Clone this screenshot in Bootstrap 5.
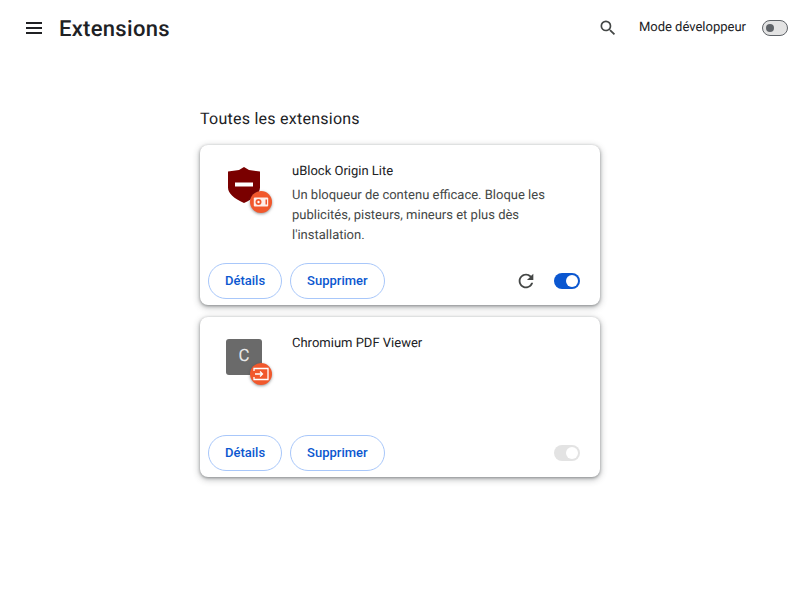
<!DOCTYPE html>
<html lang="fr"><head><meta charset="utf-8"><title>Extensions</title>
<link href="https://cdn.jsdelivr.net/npm/bootstrap@5.3.0/dist/css/bootstrap.min.css" rel="stylesheet">
<style>
body{font-family:Roboto,"Liberation Sans",sans-serif;background:#fff;color:#202124;font-size:13px;text-rendering:geometricPrecision}
.top-bar{height:56px;padding:0 12px 0 24px}
.burger{width:20px;height:20px;display:block}
.page-title{font-size:22px;font-weight:500;letter-spacing:.3px;margin:4px 0 0 15px;line-height:26px;color:#202124}
.dev-label{font-size:13px;margin:0 16px 0 21px;color:#202124}
.search-ico{width:20px;height:20px;display:block}
.sw{display:block;width:26px;height:16px;border-radius:8px;position:relative;flex:none}
.sw::after{content:"";position:absolute;border-radius:50%}
.sw-off{background:#e3e3e3;border:1px solid #5f6368}
.sw-off::after{left:3px;top:3px;width:8px;height:8px;background:#5f6368}
.sw-on{background:#0b57d0}
.sw-on::after{right:2px;top:2px;width:12px;height:12px;background:#fff}
.sw-dis{background:#e3e3e3}
.sw-dis::after{right:2px;top:2px;width:12px;height:12px;background:#fff}
.main-col{width:400px;margin:0 auto;padding-top:51px}
.sect-title{font-size:16px;font-weight:400;letter-spacing:.25px;line-height:24px;margin:0 0 14px;color:#202124}
.ext-card{height:160px;border-radius:8px;background:#fff;box-shadow:0 1px 3px rgba(60,64,67,.45),0 2px 6px 1px rgba(60,64,67,.3);margin-bottom:12px}
.ext-body{padding:16px 20px 0 24px;flex:1 1 auto}
.ico-box{width:48px;height:48px;position:relative;flex:none;margin-right:20px;padding:6px 0 0 2px}
.shield{margin-left:2px}
.ext-text{padding-top:1px}
.ext-name{font-size:13px;line-height:20px;color:#202124;margin:0}
.ext-desc{font-size:13px;line-height:20px;color:#444746;margin:4px 0 0}
.ext-foot{padding:0 20px 6px 8px;height:42px}
.pill{height:36px;border-radius:18px;border:1px solid #a8c7fa;color:#0b57d0;background:#fff;font-weight:500;font-size:13px;padding:0 16px;line-height:34px}
.pill:hover{color:#0b57d0;border-color:#a8c7fa}
.mini-badge{position:absolute;left:26px;top:30px;width:22px;height:22px;border-radius:50%;background:#f1582c;box-shadow:0 1px 3px rgba(60,64,67,.55);display:flex;align-items:center;justify-content:center}
.letter-tile{width:36px;height:36px;background:#6a6a6a;border-radius:3px;color:#e8e8e8;font-size:17px;display:flex;align-items:center;justify-content:center}
.reload{width:22px;height:22px;display:block;margin-right:9px}
</style></head><body>
<header class="top-bar d-flex align-items-center">
<svg class="burger" viewBox="0 0 20 20"><path d="M2 5h16M2 10h16M2 15h16" stroke="#202124" stroke-width="2" fill="none"/></svg>
<h1 class="page-title">Extensions</h1>
<div class="ms-auto d-flex align-items-center">
<svg class="search-ico" viewBox="0 0 24 24"><path fill="#444746" d="M15.500 14h-.79l-.28-.27A6.470 6.470 0 0 0 16 9.500 6.500 6.500 0 1 0 9.500 16c1.610 0 3.090-.59 4.230-1.570l.27.28v.79l5 4.990L20.490 19l-4.990-5zm-6 0C7.010 14 5 11.990 5 9.500S7.010 5 9.500 5 14 7.010 14 9.500 11.990 14 9.500 14z"/></svg>
<span class="dev-label">Mode développeur</span>
<span class="sw sw-off"></span>
</div>
</header>
<main class="main-col">
<h2 class="sect-title">Toutes les extensions</h2>
<section class="ext-card d-flex flex-column">
<div class="ext-body d-flex">
<div class="ico-box">
<svg width="32" height="36" viewBox="0 0 32 36" class="d-block shield"><path fill="#7a0000" d="M16 0l5 3 11 1.500v16c0 6-6 11-16 15.500C6 31.500 0 26.500 0 20.500v-16L11 3z"/><rect x="7" y="15.500" width="18" height="4" fill="#fff"/></svg>
<span class="mini-badge"><svg width="16" height="12" viewBox="0 0 16 12"><rect x=".8" y="1.500" width="14.400" height="9" rx="1" fill="#fff" fill-opacity=".9"/><circle cx="5.500" cy="6" r="3" fill="#f1582c"/><circle cx="5.500" cy="6" r="1.200" fill="#fff"/><rect x="12.500" y="3.500" width="1.500" height="5" fill="#f1582c"/></svg></span>
</div>
<div class="flex-grow-1 ext-text">
<p class="ext-name">uBlock Origin Lite</p>
<p class="ext-desc">Un bloqueur de contenu efficace. Bloque les publicités, pisteurs, mineurs et plus dès l'installation.</p>
</div>
</div>
<div class="ext-foot d-flex align-items-center gap-2">
<button class="btn pill">Détails</button>
<button class="btn pill">Supprimer</button>
<svg class="reload ms-auto" viewBox="0 0 24 24"><path fill="#444746" d="M17.650 6.350A7.958 7.958 0 0 0 12 4c-4.420 0-7.990 3.580-7.990 8s3.570 8 7.990 8c3.730 0 6.840-2.550 7.730-6h-2.080A5.990 5.990 0 0 1 12 18c-3.310 0-6-2.690-6-6s2.690-6 6-6c1.660 0 3.140.69 4.220 1.780L13 11h7V4l-2.350 2.350z"/></svg>
<span class="sw sw-on"></span>
</div>
</section>
<section class="ext-card d-flex flex-column">
<div class="ext-body d-flex">
<div class="ico-box">
<div class="letter-tile">C</div>
<span class="mini-badge"><svg width="16" height="14" viewBox="0 0 16 14"><path d="M1 4V1.500h14v11H1V10" fill="none" stroke="#fff" stroke-width="1.300"/><path d="M2 7h7M7 4.500 9.500 7 7 9.500" fill="none" stroke="#fff" stroke-width="1.300"/></svg></span>
</div>
<div class="flex-grow-1 ext-text"><p class="ext-name">Chromium PDF Viewer</p></div>
</div>
<div class="ext-foot d-flex align-items-center gap-2">
<button class="btn pill">Détails</button>
<button class="btn pill">Supprimer</button>
<span class="sw sw-dis ms-auto"></span>
</div>
</section>
</main>
<script src="https://cdn.jsdelivr.net/npm/bootstrap@5.3.0/dist/js/bootstrap.bundle.min.js"></script>
</body></html>
